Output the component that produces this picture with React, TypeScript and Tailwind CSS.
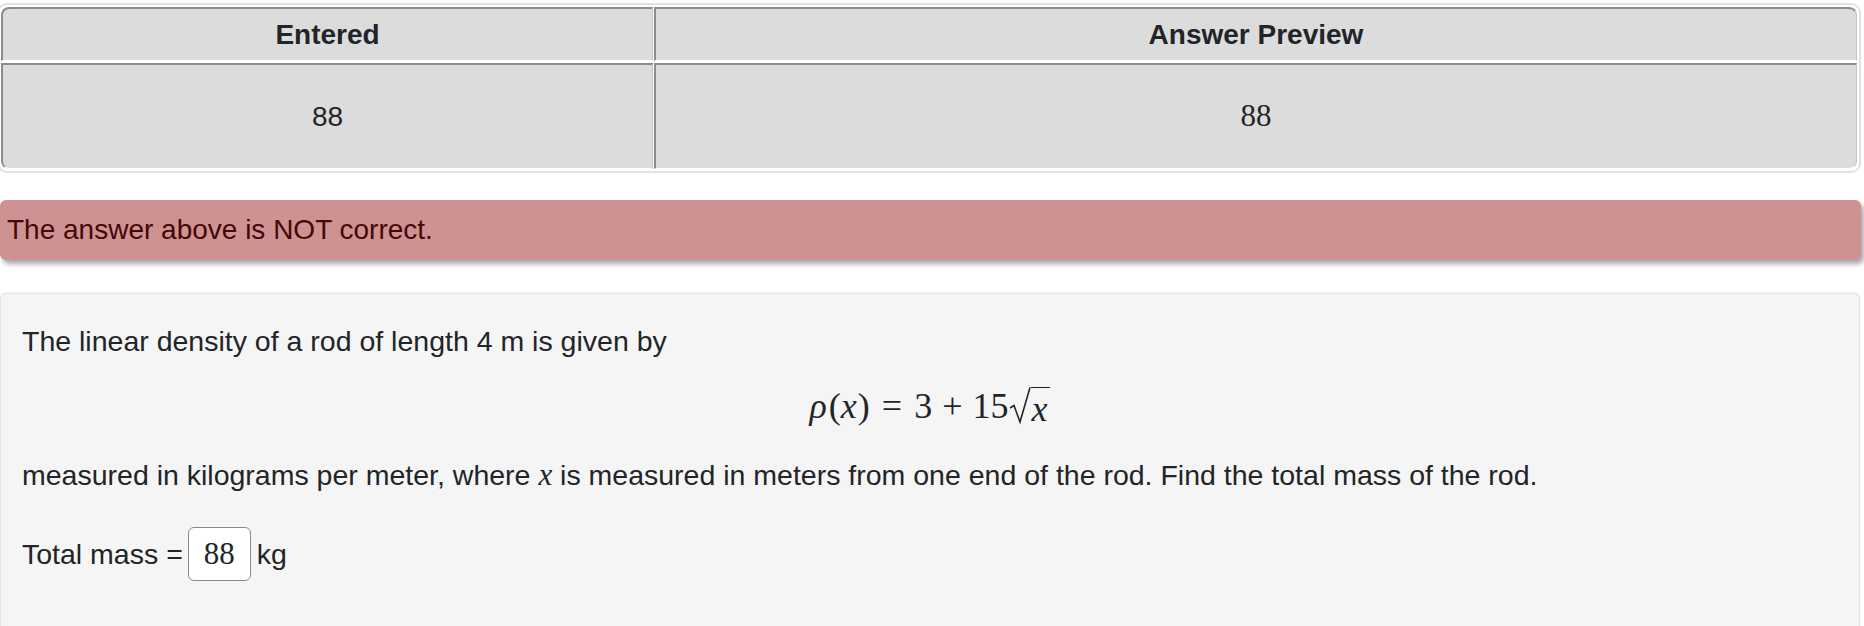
import React from 'react'

const cell = 'flex items-center justify-center bg-[#dcdcdc] border-t-2 border-l-2 border-t-[#8c8c8c] border-l-[#8c8c8c] border-r border-b border-r-[#c4c4c4] border-b-white'

function MathLine() {
  return (
    <div className="flex items-center justify-center font-['Liberation_Serif',serif] text-[36px] text-[#212529] leading-none">
      <span className="italic">ρ</span>
      <span className="ml-[2px]">(</span>
      <span className="italic">x</span>
      <span className="ml-[1px]">)</span>
      <span className="mx-[12px]">=</span>
      <span>3</span>
      <span className="mx-[10px]">+</span>
      <span>15</span>
      <span className="inline-flex items-start ml-[1px]">
        <svg width="22" height="40" viewBox="0 0 22 40" className="-mb-[6px]">
          <path d="M1 22 L5 19.5 L11 36 L21 1.5" stroke="#212529" strokeWidth="1.6" fill="none" />
        </svg>
        <span className="italic border-t-[1.6px] border-[#212529] pt-[3px] pr-[3px] mt-[1px]">x</span>
      </span>
    </div>
  )
}

export default function App() {
  return (
    <div className="min-h-screen bg-white font-['Liberation_Sans',Arial,sans-serif] text-[28px] text-[#212529] overflow-hidden">
      {/* attempt results table */}
      <div className="mt-[3px] -ml-[3px] w-[1864px] border-2 border-[#e2e2e2] rounded-[10px] p-[2px] bg-white">
        <div className="grid grid-cols-[652px_1fr] gap-x-[1px] gap-y-[2px]">
          <div className={`${cell} h-[54px] font-bold rounded-tl-[8px]`}>Entered</div>
          <div className={`${cell} h-[54px] font-bold rounded-tr-[8px]`}>Answer Preview</div>
          <div className={`${cell} h-[106px] rounded-bl-[8px]`}>88</div>
          <div className={`${cell} h-[106px] rounded-br-[8px] font-['Liberation_Serif',serif] text-[31px]`}>88</div>
        </div>
      </div>

      <div className="mt-[27px] mr-[3px] h-[60px] flex items-center pl-[7px] rounded-[6px] bg-[#ce9292] text-[#450707] shadow-[3px_4px_5px_rgba(0,0,0,0.35)]">
        The answer above is NOT correct.
      </div>

      <div className="mt-[33px] mr-[4px] rounded-[6px] border border-[#e3e3e3] bg-[#f5f5f5] pl-[21px] pr-[21px] pt-[26px] pb-[60px] text-[28.5px] shadow-[0_-1px_2px_rgba(0,0,0,0.05)]">
        <p className="leading-[42px]">The linear density of a rod of length 4 m is given by</p>
        <div className="mt-[19px] h-[50px] flex items-center justify-center">
          <MathLine />
        </div>
        <p className="mt-[23px] leading-[42px]">
          measured in kilograms per meter, where{' '}
          <span className="font-['Liberation_Serif',serif] italic text-[31px]">x</span> is measured in meters from one end of the rod. Find the total mass of the rod.
        </p>
        <div className="mt-[31px] h-[54px] flex items-center">
          <span>Total mass =</span>
          <span className="ml-[5px] w-[63px] h-[54px] flex items-center justify-center bg-white border border-[#8a8a8a] rounded-[6px] font-['Liberation_Serif',serif] text-[31px]">
            88
          </span>
          <span className="ml-[6px]">kg</span>
        </div>
      </div>
    </div>
  )
}
